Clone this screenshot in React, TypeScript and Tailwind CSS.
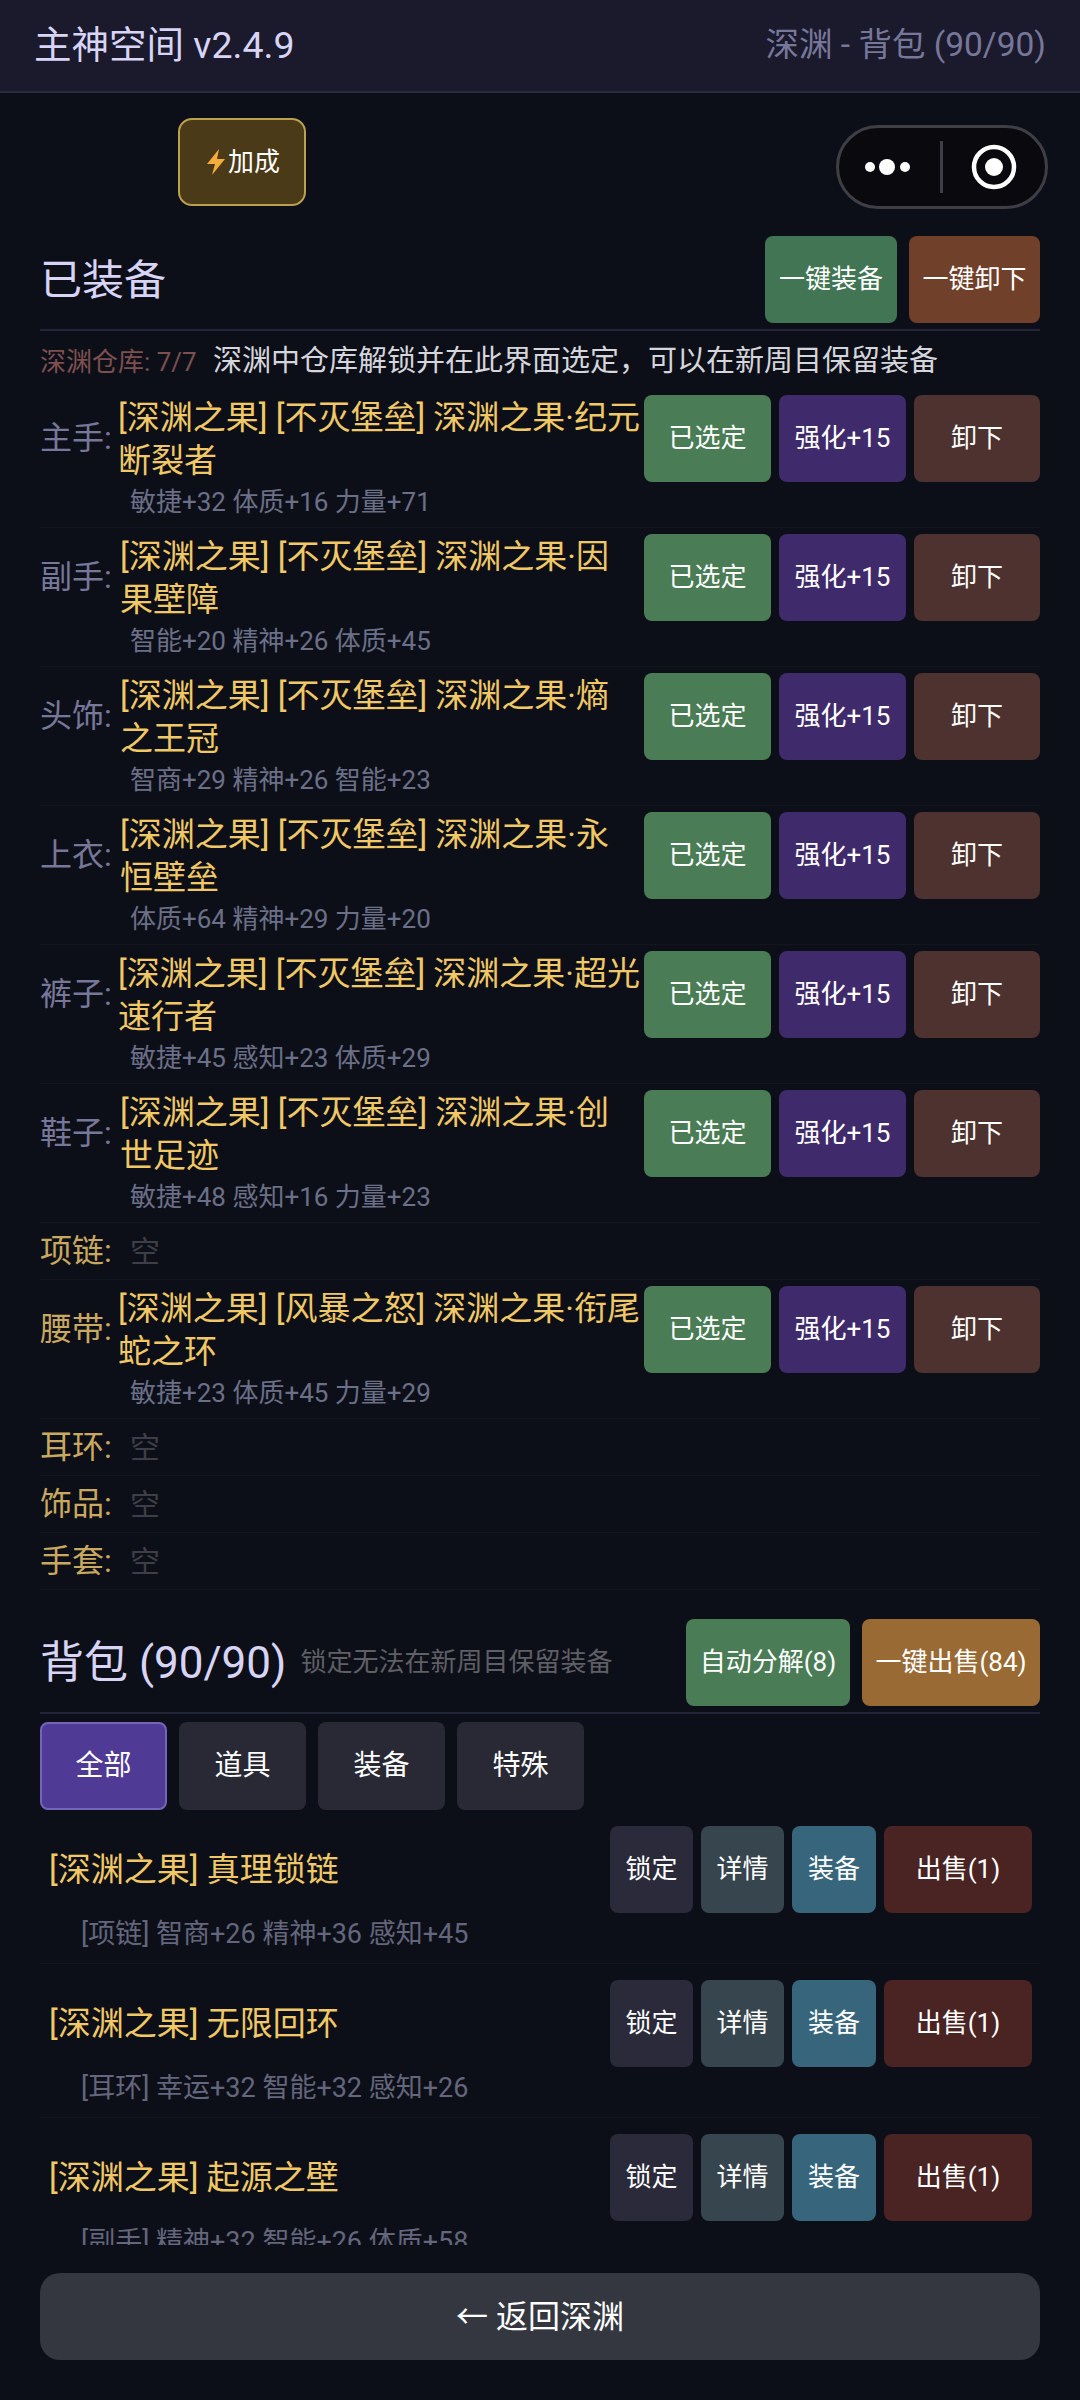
const equipped = [
  { slot: '主手', name: '[深渊之果] [不灭堡垒] 深渊之果·纪元断裂者', stats: '敏捷+32 体质+16 力量+71', full: true },
  { slot: '副手', name: '[深渊之果] [不灭堡垒] 深渊之果·因果壁障', stats: '智能+20 精神+26 体质+45', full: false },
  { slot: '头饰', name: '[深渊之果] [不灭堡垒] 深渊之果·熵之王冠', stats: '智商+29 精神+26 智能+23', full: false },
  { slot: '上衣', name: '[深渊之果] [不灭堡垒] 深渊之果·永恒壁垒', stats: '体质+64 精神+29 力量+20', full: false },
  { slot: '裤子', name: '[深渊之果] [不灭堡垒] 深渊之果·超光速行者', stats: '敏捷+45 感知+23 体质+29', full: true },
  { slot: '鞋子', name: '[深渊之果] [不灭堡垒] 深渊之果·创世足迹', stats: '敏捷+48 感知+16 力量+23', full: false },
];

const items = [
  { name: '[深渊之果] 真理锁链', stats: '[项链] 智商+26 精神+36 感知+45' },
  { name: '[深渊之果] 无限回环', stats: '[耳环] 幸运+32 智能+32 感知+26' },
  { name: '[深渊之果] 起源之壁', stats: '[副手] 精神+32 智能+26 体质+58' },
];

const EquipRow = ({ slot, name, stats, full, gold }: { slot: string; name: string; stats: string; full: boolean; gold?: boolean }) => (
  <div className="pt-[6px] h-[139px] border-b border-[#14161f]">
    <div className="flex items-center h-[87px]">
      <span className={`w-[78px] shrink-0 text-[32px] leading-[43px] ${gold ? 'text-[#c9a860]' : 'text-[#77779a]'}`}>{slot}:</span>
      <div className={`flex-1 min-w-0 text-[33px] leading-[43px] text-[#f0c866] ${full ? '-mr-[4px]' : 'pl-[2px] pr-[20px]'}`}>{name}</div>
      <div className="flex gap-2 shrink-0 ml-[3px] text-[26px] text-white">
        <button className="w-[127px] h-[87px] rounded-lg bg-[#4a7c55]">已选定</button>
        <button className="w-[127px] h-[87px] rounded-lg bg-[#3f2b6b]">强化+15</button>
        <button className="w-[126px] h-[87px] rounded-lg bg-[#4e322f]">卸下</button>
      </div>
    </div>
    <div className="pl-[90px] text-[26px] leading-[38px] mt-[1px] text-[#6b7088]">{stats}</div>
  </div>
);

const EmptyRow = ({ slot }: { slot: string }) => (
  <div className="flex items-center h-[57px] border-b border-[#14161f] text-[32px]">
    <span className="w-[90px] shrink-0 text-[#c9a860]">{slot}:</span>
    <span className="text-[#3d3e48] text-[30px]">空</span>
  </div>
);

export default function App() {
  return (
    <div className="relative flex flex-col w-[1080px] h-[2400px] overflow-hidden bg-[#0d0f18] text-white font-['Roboto','Noto_Sans_CJK_SC',sans-serif] font-normal">
      <header className="flex items-center justify-between h-[93px] shrink-0 px-[34px] bg-[#1a1a2c] border-b-2 border-[#2b2b3d]">
        <span className="text-[37.5px] text-[#d8d4f6]">主神空间 v2.4.9</span>
        <span className="text-[33.5px] text-[#77779a]">深渊 - 背包 (90/90)</span>
      </header>

      {/* capsule sits on top of the page, it belongs to the host app */}
      <div className="absolute top-[125px] left-[836px] flex items-center w-[212px] h-[84px] rounded-full border-[3px] border-[#3e3e44] bg-[#0a0a0e]">
        <svg width="101" height="52" viewBox="0 0 101 52" className="shrink-0">
          <circle cx="31" cy="26" r="5" fill="#fff" />
          <circle cx="48" cy="26" r="8" fill="#fff" />
          <circle cx="66" cy="26" r="5" fill="#fff" />
        </svg>
        <div className="w-[3px] h-[52px] bg-[#3e3e44]" />
        <svg width="100" height="52" viewBox="0 0 100 52" className="shrink-0">
          <circle cx="51" cy="26" r="20" fill="none" stroke="#fff" strokeWidth="4.5" />
          <circle cx="51" cy="26" r="9" fill="#fff" />
        </svg>
      </div>

      <main className="flex-1 min-h-0 overflow-hidden px-10 pt-[25px]">
        <button className="flex items-center justify-center ml-[138px] w-[128px] h-[88px] rounded-[14px] border-2 border-[#bba04e] bg-[#4a3a18] text-[26px]">
          <svg width="24" height="28" viewBox="0 0 22 28" className="shrink-0">
            <polygon points="14,1 2,16 10,16 7,27 20,11 12,11" fill="#f5ac3c" />
          </svg>
          加成
        </button>

        <div className="flex items-center justify-between mt-[30px] pb-[6px] border-b-2 border-[#25253a]">
          <h2 className="pt-[2px] text-[42px] text-[#d8d4f6]">已装备</h2>
          <div className="flex gap-3 text-[26px]">
            <button className="w-[132px] h-[87px] rounded-lg bg-[#417554]">一键装备</button>
            <button className="w-[131px] h-[87px] rounded-lg bg-[#70402b]">一键卸下</button>
          </div>
        </div>

        <div className="flex items-center h-[58px] pt-[4px]">
          <span className="text-[26px] text-[#7d4f4f] w-[173px] shrink-0">深渊仓库: 7/7</span>
          <span className="text-[29px] text-[#d5d5dc]">深渊中仓库解锁并在此界面选定，可以在新周目保留装备</span>
        </div>

        {equipped.map((row) => (
          <EquipRow key={row.slot} {...row} />
        ))}
        <EmptyRow slot="项链" />
        <EquipRow slot="腰带" name="[深渊之果] [风暴之怒] 深渊之果·衔尾蛇之环" stats="敏捷+23 体质+45 力量+29" full gold />
        <EmptyRow slot="耳环" />
        <EmptyRow slot="饰品" />
        <EmptyRow slot="手套" />

        <div className="flex items-center justify-between mt-[29px] pb-[6px] border-b-2 border-[#25253a]">
          <div className="flex items-center gap-[14px]">
            <h2 className="text-[44px] text-[#d8d4f6]">背包 (90/90)</h2>
            <span className="text-[26px] text-[#5f5f66]">锁定无法在新周目保留装备</span>
          </div>
          <div className="flex gap-3 text-[26px]">
            <button className="w-[164px] h-[87px] rounded-lg bg-[#4a7c55]">自动分解(8)</button>
            <button className="w-[178px] h-[87px] rounded-lg bg-[#996a33]">一键出售(84)</button>
          </div>
        </div>

        <div className="flex gap-3 mt-2 text-[28px]">
          <button className="w-[127px] h-[88px] rounded-lg border-2 border-[#7564bb] bg-[#4f3a96]">全部</button>
          <button className="w-[127px] h-[88px] rounded-lg bg-[#292935]">道具</button>
          <button className="w-[127px] h-[88px] rounded-lg bg-[#292935]">装备</button>
          <button className="w-[127px] h-[88px] rounded-lg bg-[#292935]">特殊</button>
        </div>

        {items.map((item) => (
          <div key={item.name} className="px-2 pt-4 h-[154px] border-b border-[#14161f]">
            <div className="flex items-center justify-between">
              <span className="pl-[1px] text-[33px] text-[#f0c866]">{item.name}</span>
              <div className="flex gap-2 text-[26px]">
                <button className="w-[83px] h-[87px] rounded-lg bg-[#2a2a3a]">锁定</button>
                <button className="w-[83px] h-[87px] rounded-lg bg-[#37454f]">详情</button>
                <button className="w-[84px] h-[87px] rounded-lg bg-[#37667c]">装备</button>
                <button className="w-[148px] h-[87px] rounded-lg bg-[#4a2323]">出售(1)</button>
              </div>
            </div>
            <div className="pl-[33px] mt-[2px] text-[27px] leading-[38px] text-[#63667c]">{item.stats}</div>
          </div>
        ))}
      </main>

      <footer className="shrink-0 h-[155px] px-10 pt-[28px]">
        <button className="w-full h-[87px] rounded-[20px] bg-[#34373f] text-[32px]">← 返回深渊</button>
      </footer>
    </div>
  );
}
